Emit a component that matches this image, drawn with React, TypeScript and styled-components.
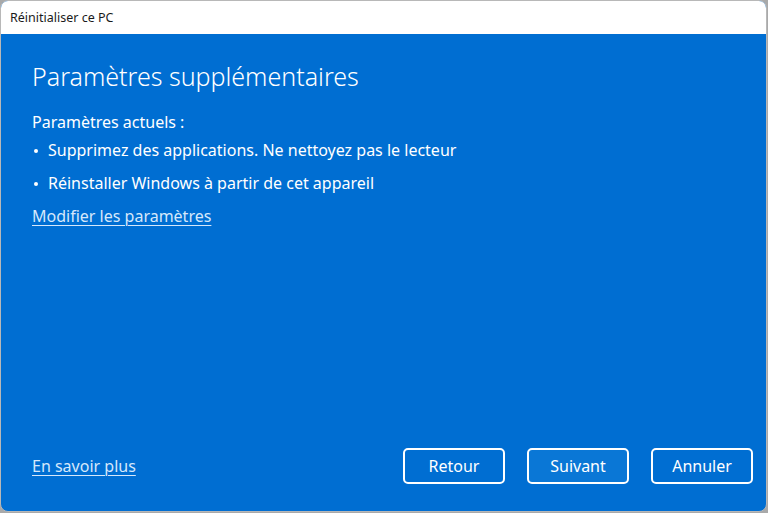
import React from "react";
import styled, { createGlobalStyle } from "styled-components";

const Global = createGlobalStyle`
  html, body { margin: 0; padding: 0; background: #a9a9a9; }
  body { font-family: "Noto Sans", "Open Sans", sans-serif; }
`;

const Window = styled.div`
  box-sizing: border-box;
  width: 767px;
  height: 512px;
  border: 1px solid #b8b8b8;
  border-radius: 8px;
  overflow: hidden;
  display: flex;
  flex-direction: column;
  background: #006ed2;
`;

const TitleBar = styled.div`
  height: 33px;
  flex: none;
  background: #ffffff;
  display: flex;
  align-items: center;
  padding-left: 9px;
  font-size: 12.5px;
  color: #1a1a1a;
`;

const Content = styled.div`
  flex: 1;
  display: flex;
  flex-direction: column;
  padding: 22px 13px 27px 31px;
  color: #ffffff;
`;

const Heading = styled.h1`
  margin: 0;
  font-size: 25px;
  font-weight: 300;
  line-height: 40px;
`;

const Label = styled.div`
  margin-top: 16px;
  font-size: 16px;
  line-height: 21px;
`;

const List = styled.ul`
  list-style: none;
  margin: 7px 0 0 0;
  padding: 0;
  display: flex;
  flex-direction: column;
  gap: 12px;
`;

const Item = styled.li`
  display: flex;
  align-items: center;
  font-size: 16px;
  line-height: 21px;
  &::before {
    content: "";
    width: 4px;
    height: 4px;
    border-radius: 50%;
    background: #ffffff;
    margin: 0 10px 0 2px;
    flex: none;
  }
`;

const Link = styled.a`
  color: #d6e8fb;
  font-size: 16px;
  line-height: 21px;
  text-decoration: underline;
  text-underline-offset: 3px;
  text-decoration-thickness: 1px;
  cursor: pointer;
  width: fit-content;
`;

const TopLink = styled(Link)`
  margin-top: 12px;
`;

const Spacer = styled.div`
  flex: 1;
`;

const Footer = styled.div`
  display: flex;
  align-items: center;
  justify-content: space-between;
`;

const Buttons = styled.div`
  display: flex;
  gap: 22px;
`;

const Button = styled.button<{ $primary?: boolean }>`
  box-sizing: border-box;
  width: 102px;
  height: 36px;
  border: 2px solid #ffffff;
  border-radius: 5px;
  background: ${(p) => (p.$primary ? "#0a77d6" : "transparent")};
  color: #ffffff;
  font-family: inherit;
  font-size: 16px;
  padding: 0;
  cursor: pointer;
`;

export default function App() {
  return (
    <>
      <Global />
      <Window>
        <TitleBar>Réinitialiser ce PC</TitleBar>
        <Content>
          <Heading>Paramètres supplémentaires</Heading>
          <Label>Paramètres actuels :</Label>
          <List>
            <Item>Supprimez des applications. Ne nettoyez pas le lecteur</Item>
            <Item>Réinstaller Windows à partir de cet appareil</Item>
          </List>
          <TopLink>Modifier les paramètres</TopLink>
          <Spacer />
          <Footer>
            <Link>En savoir plus</Link>
            <Buttons>
              <Button>Retour</Button>
              <Button $primary>Suivant</Button>
              <Button>Annuler</Button>
            </Buttons>
          </Footer>
        </Content>
      </Window>
    </>
  );
}
